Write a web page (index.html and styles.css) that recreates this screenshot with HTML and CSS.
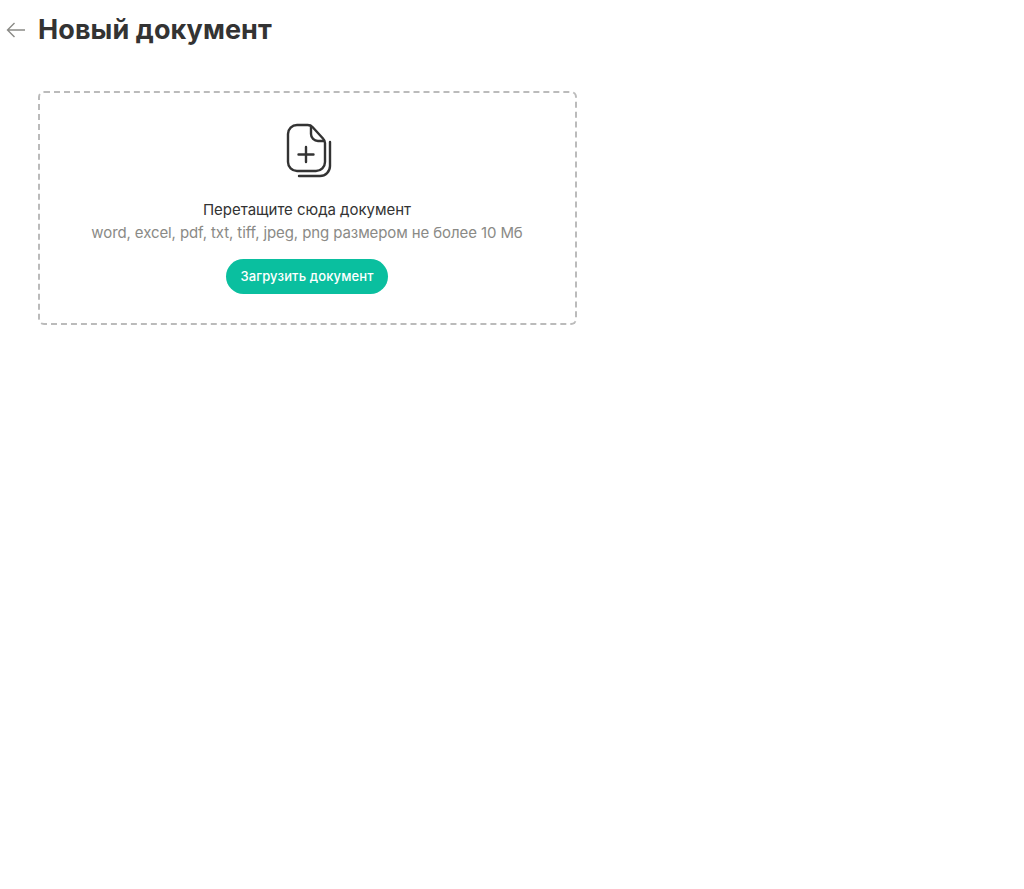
FILE: index.html
```html
<!DOCTYPE html>
<html lang="ru">
<head>
<meta charset="utf-8">
<title>Новый документ</title>
<link rel="stylesheet" href="styles.css">
</head>
<body>
<header class="page-head">
  <svg class="back" width="20" height="16" viewBox="0 0 20 16" fill="none" stroke="#8a8a86" stroke-width="1.4"><path d="M19 8H1.5M8.5 1L1.5 8l7 7"/></svg>
  <h1 class="title">Новый документ</h1>
</header>
<main class="content">
  <section class="drop">
    <svg class="doc-icon" width="46" height="56" viewBox="0 0 46 56" fill="none" stroke="#333" stroke-width="2.4" stroke-linecap="round" stroke-linejoin="round">
      <path d="M21 2H11a9 9 0 0 0-9 9v28a9 9 0 0 0 9 9h19a9 9 0 0 0 9-9V20a6 6 0 0 0-1.800-4.200L26.500 4A7 7 0 0 0 21 2z"/>
      <path d="M25 3v8a7 7 0 0 0 7 7h6"/>
      <path d="M20 24v15M12.500 31.500h15"/>
      <path d="M44 19v24a10 10 0 0 1-10 10H13"/>
    </svg>
    <p class="lead">Перетащите сюда документ</p>
    <p class="hint">word, excel, pdf, txt, tiff, jpeg, png размером не более 10 Мб</p>
    <button class="upload">Загрузить документ</button>
  </section>
</main>
</body>
</html>
```
FILE: styles.css
```css
* { box-sizing: border-box; }
html, body { margin: 0; background: #fff; }
body { font-family: Inter, "Noto Sans", sans-serif; color: #333; }
.page-head { display: flex; align-items: center; height: 60px; padding-left: 6px; }
.back { flex: none; margin-right: 12px; }
.title { margin: 0; font-size: 27px; line-height: 32px; font-weight: 700; letter-spacing: 0.08px; color: #333; }
.content { padding: 31px 0 0 38px; }
.drop { width: 539px; height: 234px; border: 2px dashed #bbb; border-radius: 6px; display: flex; flex-direction: column; align-items: center; padding: 30px 1px 0 0; }
.doc-icon { display: block; margin: 0 0 21px 3px; }
.lead { margin: 0; font-size: 15px; line-height: 20px; color: #333; letter-spacing: -0.03px; }
.hint { margin: 3px 0 0; font-size: 15px; line-height: 20px; color: #8a8a86; letter-spacing: -0.1px; }
.upload { margin-top: 16px; width: 162px; height: 35px; border: 0; border-radius: 18px; background: #0abf9f; color: #fff; font: 500 13px/35px Inter, sans-serif; letter-spacing: 0.13px; padding: 0; }
```
